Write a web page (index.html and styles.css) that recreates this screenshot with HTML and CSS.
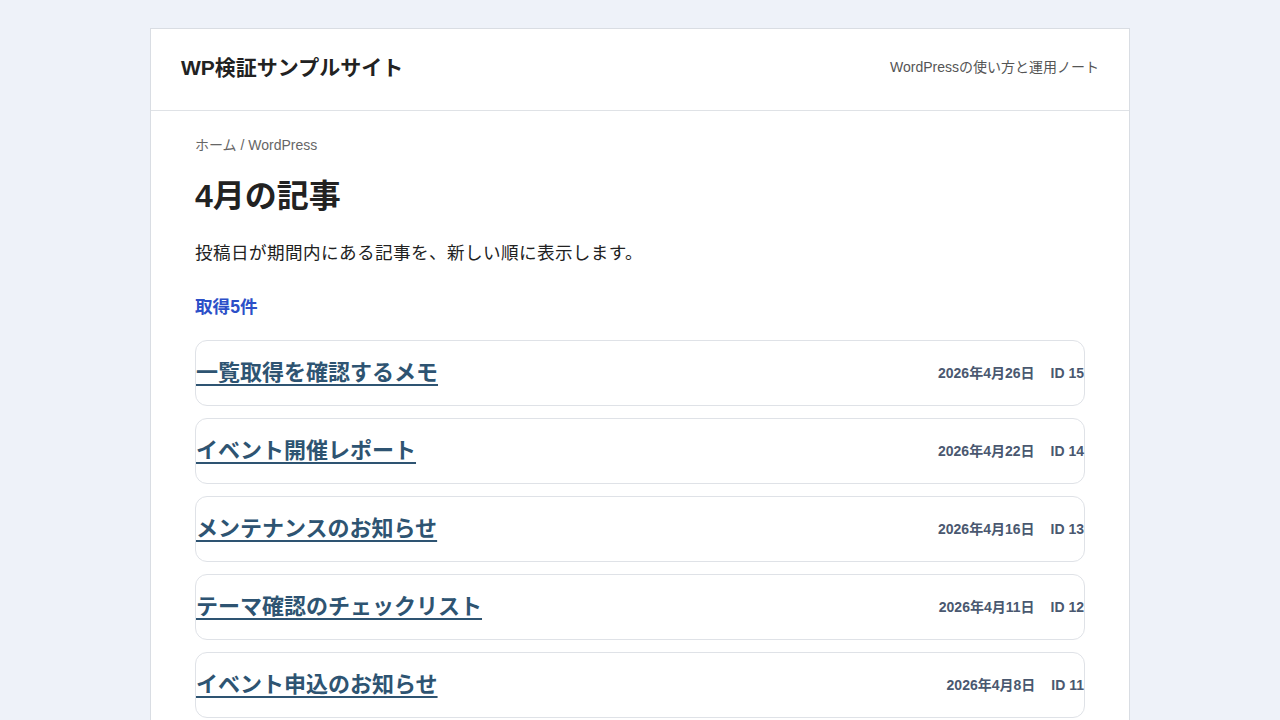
FILE: index.html
```html
<!DOCTYPE html>
<html lang="ja">
<head>
<meta charset="utf-8">
<title>4月の記事 - WP検証サンプルサイト</title>
<link rel="stylesheet" href="styles.css">
</head>
<body>
<div class="site">
  <header class="site-header">
    <div class="site-title">WP検証サンプルサイト</div>
    <div class="site-tagline">WordPressの使い方と運用ノート</div>
  </header>
  <main class="content">
    <nav class="breadcrumb">ホーム / WordPress</nav>
    <h1 class="page-title">4月の記事</h1>
    <p class="lead">投稿日が期間内にある記事を、新しい順に表示します。</p>
    <p class="count">取得5件</p>
    <ul class="post-list">
      <li class="post-card">
        <a class="post-title" href="#">一覧取得を確認するメモ</a>
        <div class="post-meta"><span>2026年4月26日</span><span>ID 15</span></div>
      </li>
      <li class="post-card">
        <a class="post-title" href="#">イベント開催レポート</a>
        <div class="post-meta"><span>2026年4月22日</span><span>ID 14</span></div>
      </li>
      <li class="post-card">
        <a class="post-title" href="#">メンテナンスのお知らせ</a>
        <div class="post-meta"><span>2026年4月16日</span><span>ID 13</span></div>
      </li>
      <li class="post-card">
        <a class="post-title" href="#">テーマ確認のチェックリスト</a>
        <div class="post-meta"><span>2026年4月11日</span><span>ID 12</span></div>
      </li>
      <li class="post-card">
        <a class="post-title" href="#">イベント申込のお知らせ</a>
        <div class="post-meta"><span>2026年4月8日</span><span>ID 11</span></div>
      </li>
    </ul>
  </main>
</div>
</body>
</html>
```

FILE: styles.css
```css
* { box-sizing: border-box; }
html, body { margin: 0; padding: 0; }
body {
  background: #eef2f9;
  font-family: "Liberation Sans", "Noto Sans CJK JP", sans-serif;
  color: #222;
}
.site {
  width: 980px;
  margin: 28px auto 0;
  background: #fff;
  border: 1px solid #d9dde3;
  min-height: 720px;
}
.site-header {
  height: 82px;
  padding: 0 30px 8px;
  display: flex;
  align-items: center;
  justify-content: space-between;
  border-bottom: 1px solid #dfe2e6;
}
.site-title {
  font-size: 21px;
  font-weight: bold;
  color: #222;
}
.site-tagline {
  font-size: 14px;
  color: #555;
}
.content {
  padding: 24px 44px 0;
}
.breadcrumb {
  font-size: 14px;
  color: #666;
  line-height: 20px;
}
.page-title {
  margin: 19px 0 0;
  font-size: 32px;
  line-height: 44px;
  font-weight: bold;
  color: #222;
}
.lead {
  margin: 21px 0 0;
  font-size: 17.6px;
  line-height: 28px;
  letter-spacing: 0.4px;
  color: #222;
}
.count {
  margin: 26px 0 0;
  font-size: 17.6px;
  line-height: 28px;
  font-weight: bold;
  color: #2c4fc8;
}
.post-list {
  list-style: none;
  margin: 19px 0 0;
  padding: 0;
  display: flex;
  flex-direction: column;
  gap: 12px;
}
.post-card {
  height: 66px;
  border: 1px solid #dfe2e7;
  border-radius: 12px;
  display: flex;
  align-items: center;
  justify-content: space-between;
}
.post-title {
  font-size: 22px;
  font-weight: bold;
  color: #2e5472;
  text-decoration: underline;
  text-decoration-thickness: 2px;
  text-underline-offset: 4px;
  line-height: 30px;
}
.post-meta {
  display: flex;
  align-items: baseline;
  gap: 16px;
  padding-bottom: 3px;
  font-size: 14px;
  font-weight: bold;
  color: #4a5870;
}
```
